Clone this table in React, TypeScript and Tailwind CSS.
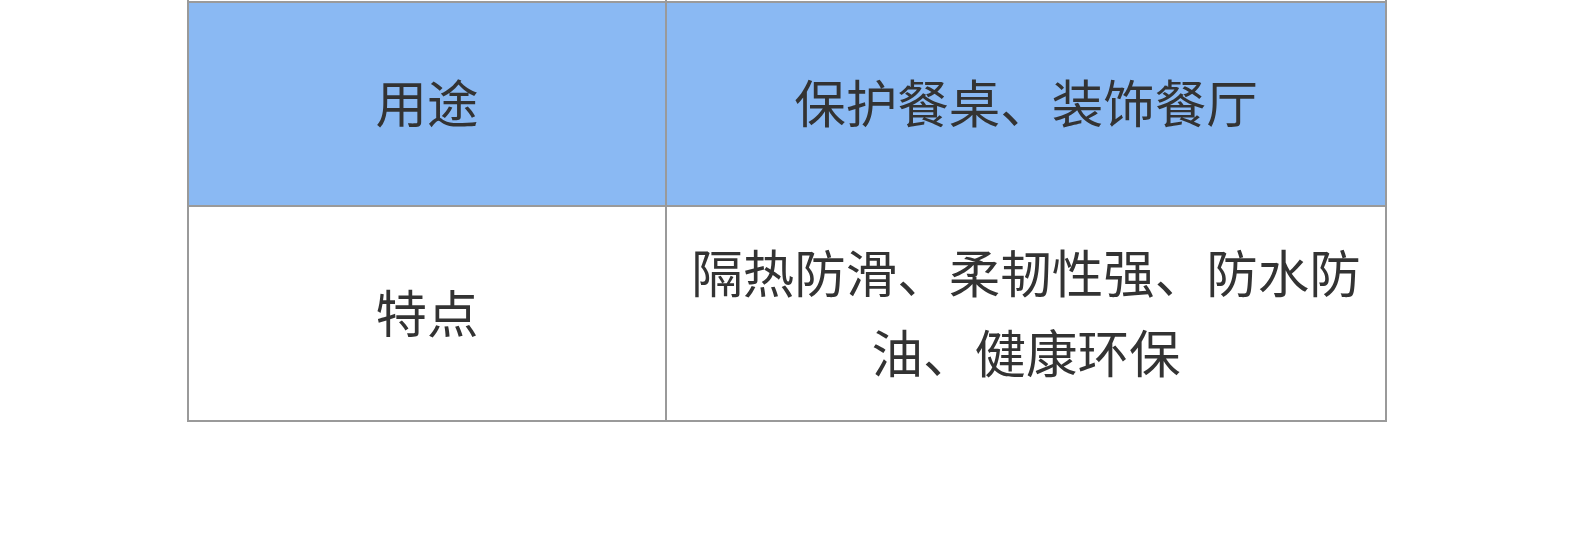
import React from "react";

export default function App() {
  const font = { fontFamily: '"Noto Sans CJK SC", "Noto Sans", sans-serif' };
  return (
    <div className="w-[1580px] h-[550px] bg-white" style={font}>
      <div className="ml-[187px] w-[1200px] border-x-2 border-[#9a9a9a] text-[#333333] text-[51.5px] leading-[80px]">
        <div className="h-px grid grid-cols-[478px_1fr]">
          <div className="border-r-2 border-[#9a9a9a]" />
          <div />
        </div>
        <div className="grid grid-cols-[478px_1fr] border-y-2 border-[#9a9a9a] bg-[#8ab9f3] h-[206px]">
          <div className="border-r-2 border-[#9a9a9a] flex items-center justify-center pb-[6px]">用途</div>
          <div className="flex items-center justify-center text-center pb-[6px]">保护餐桌、装饰餐厅</div>
        </div>
        <div className="grid grid-cols-[478px_1fr] border-b-2 border-[#9a9a9a] h-[215px] bg-white">
          <div className="border-r-2 border-[#9a9a9a] flex items-center justify-center pb-[6px]">特点</div>
          <div className="flex items-center justify-center text-center px-[4px] pb-[6px]">
            <span>隔热防滑、柔韧性强、防水防油、健康环保</span>
          </div>
        </div>
      </div>
    </div>
  );
}
